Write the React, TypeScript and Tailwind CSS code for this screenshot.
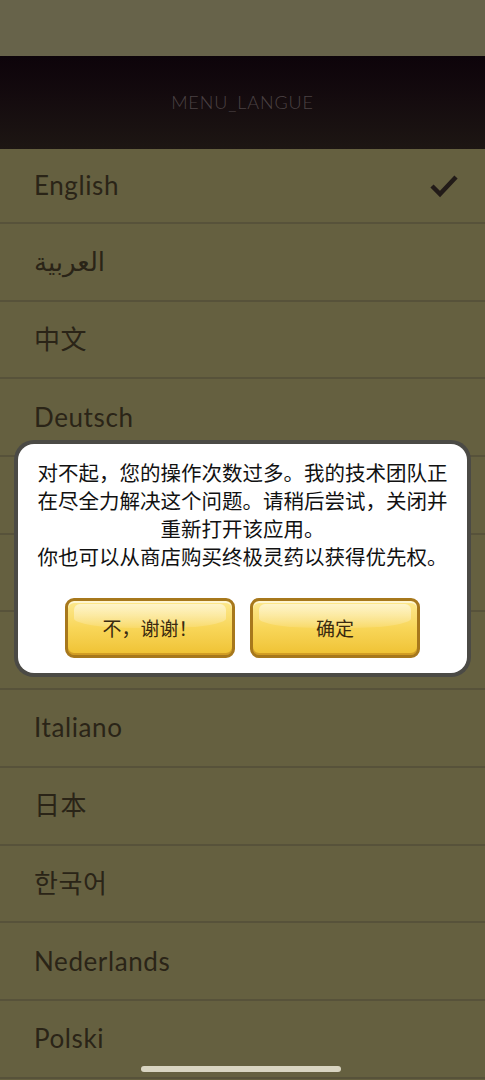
import React from "react";

const langs = [
  "English",
  "العربية",
  "中文",
  "Deutsch",
  "",
  "",
  "",
  "Italiano",
  "日本",
  "한국어",
  "Nederlands",
  "Polski",
];

const font = {
  fontFamily:
    'Lato, "Noto Sans", "Noto Sans CJK SC", "Noto Sans CJK KR", "DejaVu Sans", sans-serif',
};

function YellowButton({ label }: { label: string }) {
  return (
    <div className="relative w-[170px] h-[60px] rounded-[9px] border-[3px] border-[#a7781c] bg-gradient-to-b from-[#fde98e] via-[#f8d658] to-[#efc232] flex items-center justify-center overflow-hidden shadow-[inset_0_2px_0_rgba(255,255,255,0.6),inset_0_-2px_0_rgba(180,120,20,0.5)]">
      <div className="absolute left-[6px] right-[6px] top-[3px] h-[24px] rounded-t-[6px] rounded-b-[40%] bg-gradient-to-b from-[rgba(255,255,255,0.55)] to-[rgba(255,255,255,0.1)]" />
      <span
        className="relative text-[19px] text-[#3a2a10]"
        style={{ fontFamily: '"Noto Sans CJK SC", sans-serif' }}
      >
        {label}
      </span>
    </div>
  );
}

export default function App() {
  return (
    <div className="relative w-[485px] h-[1080px] overflow-hidden bg-[#656040]" style={font}>
      <div className="h-[56px] bg-[#67634a]" />
      <div className="h-[93px] bg-gradient-to-b from-[#0d040a] to-[#1d1613] flex items-center justify-center">
        <span className="text-[18px] font-light tracking-[0.9px] text-[#4b4244]">MENU_LANGUE</span>
      </div>
      <div className="flex flex-col">
        {langs.map((l, i) => (
          <div
            key={i}
            className={`flex items-center justify-between pl-[34px] pr-[26px] border-b-[2px] border-[#57523a] ${
              i === 0 ? "h-[75px]" : "h-[77.7px]"
            }`}
          >
            <span className="text-[26px] tracking-[0.6px] text-[#2a2417]">{l}</span>
            {i === 0 && (
              <svg width="30" height="26" viewBox="0 0 30 26">
                <path d="M3 13 L11 21 L27 4" fill="none" stroke="#221b18" strokeWidth="4.5" />
              </svg>
            )}
          </div>
        ))}
      </div>

      <div className="absolute left-[14px] top-[440px] w-[457px] h-[237px] rounded-[20px] bg-[#4b4a45] p-[4px]">
        <div className="w-full h-full rounded-[16px] bg-white flex flex-col items-center pt-[14px]">
          <p
            className="text-[20.5px] leading-[28px] text-[#111] text-center"
            style={{ fontFamily: '"Noto Sans CJK SC", sans-serif' }}
          >
            对不起，您的操作次数过多。我的技术团队正
            <br />
            在尽全力解决这个问题。请稍后尝试，关闭并
            <br />
            重新打开该应用。
            <br />
            你也可以从商店购买终极灵药以获得优先权。
          </p>
          <div className="flex gap-[15px] mt-[28px]">
            <YellowButton label="不，谢谢！" />
            <YellowButton label="确定" />
          </div>
        </div>
      </div>

      <div className="absolute left-[141px] bottom-[8px] w-[200px] h-[6px] rounded-full bg-[#d9d5c2]" />
    </div>
  );
}
